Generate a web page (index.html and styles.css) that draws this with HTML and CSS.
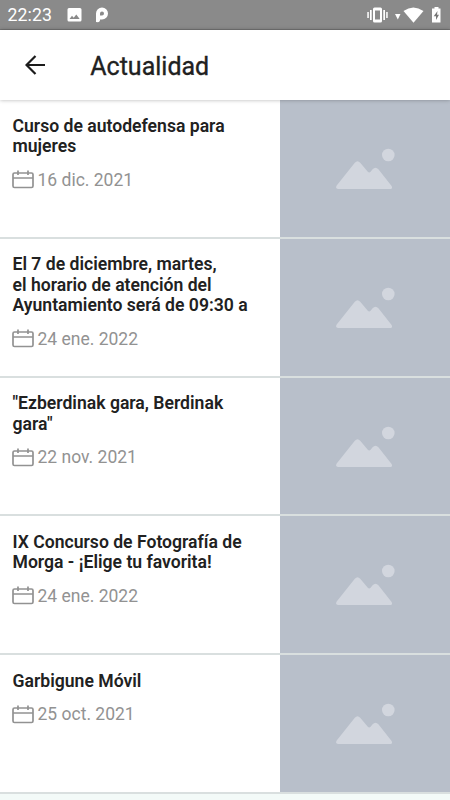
FILE: index.html
```html
<!DOCTYPE html>
<html lang="es">

<head>
    <meta charset="UTF-8">
    <title>Actualidad</title>
    <link rel="stylesheet" href="styles.css">
</head>

<body>
    <svg class="symbols" width="0" height="0">
        <symbol id="calendar" viewBox="0 0 22 19">
            <rect x="1" y="3" width="20" height="14.5" rx="1.5" />
            <path d="M1 8H21M6 0.5V5M16 0.5V5" />
        </symbol>
        <symbol id="picture" viewBox="0 0 60 42">
            <circle cx="53.3" cy="7" r="6.3" />
            <path d="M3 41Q0 40.5 1.7 37.5L19.8 14.8Q22.5 11.8 25.2 14.8L32.8 23.8Q34.2 25.2 35.6 23.8L37.6 21.2Q40.5 18.2 43.4 21.2L56.6 38Q58 40.5 55.5 41Z" />
        </symbol>
    </svg>

    <div class="status-bar">
        <span class="time">22:23</span>
        <svg class="notifications" width="42" height="16" viewBox="0 0 42 16">
            <path fill-rule="evenodd" d="M2 1H13Q14.5 1 14.5 2.5V13Q14.5 14.5 13 14.5H2Q0.5 14.5 0.5 13V2.5Q0.5 1 2 1ZM2.5 12H12.7L9.3 7.5L6.7 10.7L5 8.7Z" />
            <path fill-rule="evenodd" d="M29 15V6.5A6 6 0 1 1 35 12.5H33V13.5Q32.5 15.2 31 15.2ZM33 8.5H35A2 2 0 1 0 33 6.5Z" />
        </svg>
        <svg class="system" width="76" height="18" viewBox="0 0 76 18">
            <path fill-rule="evenodd" d="M7.5 1.5H13.5Q15 1.5 15 3V15Q15 16.5 13.5 16.5H7.5Q6 16.5 6 15V3Q6 1.5 7.5 1.5ZM8 4.5V13.5H13V4.5Z" />
            <path d="M3 4H4.7V14H3ZM0.3 6H1.8V12H0.3ZM16.3 4H18V14H16.3ZM19.2 6H20.7V12H19.2ZM28 8H33.5L30.8 13.5Z" />
            <path d="M36.5 5Q46.3-2 56.5 5L46.5 16.8Z" />
            <path d="M67.5 1H71.5V2.5H73.5V16.5H65V2.5H67.5Z" />
            <path class="bolt" d="M70.5 5L66.7 10.2H69V14L72 8.8H70Z" />
        </svg>
    </div>

    <header class="toolbar">
        <svg class="back" width="22" height="22" viewBox="0 0 22 22">
            <path d="M20 11H2M10.5 2L1.5 11L10.5 20" />
        </svg>
        <h1>Actualidad</h1>
    </header>

    <main class="news">
        <article class="item">
            <div class="info">
                <h2>Curso de autodefensa para<br>mujeres</h2>
                <div class="date"><svg class="calendar"><use href="#calendar" /></svg><span>16 dic. 2021</span></div>
            </div>
            <div class="thumb"><svg class="picture"><use href="#picture" /></svg></div>
        </article>
        <article class="item">
            <div class="info">
                <h2>El 7 de diciembre, martes,<br>el horario de atención del<br>Ayuntamiento será de 09:30 a</h2>
                <div class="date"><svg class="calendar"><use href="#calendar" /></svg><span>24 ene. 2022</span></div>
            </div>
            <div class="thumb"><svg class="picture"><use href="#picture" /></svg></div>
        </article>
        <article class="item">
            <div class="info">
                <h2>"Ezberdinak gara, Berdinak<br>gara"</h2>
                <div class="date"><svg class="calendar"><use href="#calendar" /></svg><span>22 nov. 2021</span></div>
            </div>
            <div class="thumb"><svg class="picture"><use href="#picture" /></svg></div>
        </article>
        <article class="item">
            <div class="info">
                <h2>IX Concurso de Fotografía de<br>Morga - ¡Elige tu favorita!</h2>
                <div class="date"><svg class="calendar"><use href="#calendar" /></svg><span>24 ene. 2022</span></div>
            </div>
            <div class="thumb"><svg class="picture"><use href="#picture" /></svg></div>
        </article>
        <article class="item">
            <div class="info">
                <h2>Garbigune Móvil</h2>
                <div class="date"><svg class="calendar"><use href="#calendar" /></svg><span>25 oct. 2021</span></div>
            </div>
            <div class="thumb"><svg class="picture"><use href="#picture" /></svg></div>
        </article>
    </main>
</body>

</html>
```
FILE: styles.css
```css
* {
    box-sizing: border-box;
}

body {
    margin: 0;
    height: 800px;
    overflow: hidden;
    background-color: #f3faf8;
    font-family: Roboto, sans-serif;
    color: #212121;
}

.symbols {
    display: block;
}

/* Status bar */
.status-bar {
    display: flex;
    align-items: center;
    height: 30px;
    padding: 0 7px 0 7.5px;
    background-color: #8a8a8a;
    border-bottom: 1px solid #777;
    color: white;
}

.status-bar svg {
    fill: white;
}

.time {
    width: 59.5px;
    font-size: 17.7px;
    line-height: 30px;
    letter-spacing: 0.1px;
    padding-top: 1px;
}

.system {
    margin-left: auto;
}

.system .bolt {
    fill: #777;
}

/* Toolbar */
.toolbar {
    position: relative;
    display: flex;
    align-items: center;
    height: 70px;
    padding-left: 25px;
    background-color: white;
    box-shadow: 0 0 4px rgba(0, 0, 0, 0.3);
}

.back {
    margin-right: 43.3px;
    fill: none;
    stroke: #1c1c1c;
    stroke-width: 2.2px;
}

h1 {
    margin: 2px 0 0;
    font-size: 25px;
    font-weight: 400;
    -webkit-text-stroke: 0.35px #212121;
}

/* News list */
.item {
    display: flex;
    height: 138.75px;
    border-bottom: 2px solid #d9dfdf;
    background-color: white;
}

.info {
    flex: 1;
    padding: 15.5px 0 0 12.5px;
}

h2 {
    margin: 0;
    font-size: 17.6px;
    font-weight: 600;
    line-height: 20.5px;
    white-space: nowrap;
}

.date {
    display: flex;
    align-items: center;
    gap: 3.3px;
    height: 20px;
    margin-top: 13.2px;
    margin-left: -0.3px;
    font-size: 17.5px;
    color: #929292;
}

.calendar {
    width: 22px;
    height: 19px;
    fill: none;
    stroke: #929292;
    stroke-width: 1.7px;
}

.thumb {
    width: 170px;
    padding: 48px 0 0 55px;
    background-color: #b8bfca;
}

.picture {
    width: 60px;
    height: 42px;
    fill: #d2d6de;
}
```
